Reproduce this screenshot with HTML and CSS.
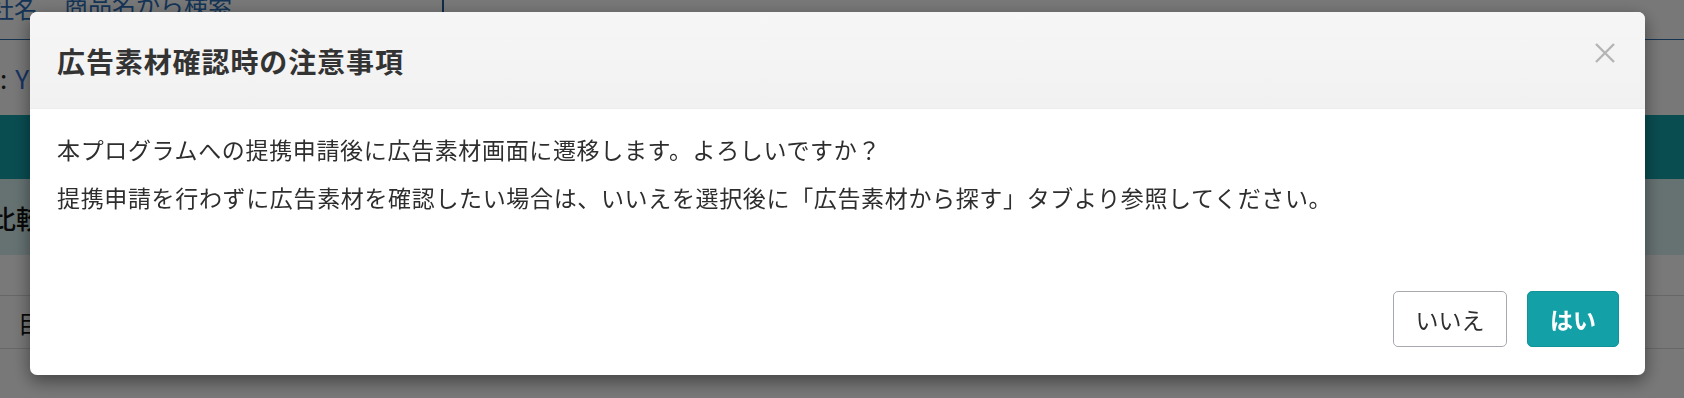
FILE: index.html
```html
<!DOCTYPE html>
<html lang="ja">
<head>
<meta charset="utf-8">
<title>広告素材確認時の注意事項</title>
<link rel="stylesheet" href="styles.css">
</head>
<body>
<div class="page">
  <div class="top-row">
    <span class="top-label">社名</span>
    <span class="top-tab">商品名から検索</span>
    <span class="top-divider"></span>
  </div>
  <div class="info-row"><span class="colon">:</span><span class="info-link">Y</span></div>
  <div class="teal-band"></div>
  <div class="light-band"><span class="compare">比較</span></div>
  <div class="blank-row"></div>
  <div class="table-row"><span class="cell">目</span></div>
  <div class="table-row short"></div>
</div>

<div class="overlay"></div>

<div class="modal" role="dialog" aria-labelledby="modal-title">
  <div class="modal-header">
    <h2 class="modal-title" id="modal-title">広告素材確認時の注意事項</h2>
    <button class="modal-close" type="button" aria-label="閉じる">
      <svg width="22" height="22" viewBox="0 0 22 22"><path d="M2 2 L20 20 M20 2 L2 20" stroke="#b4b4b4" stroke-width="2.4" fill="none"/></svg>
    </button>
  </div>
  <div class="modal-body">
    <p>本プログラムへの提携申請後に広告素材画面に遷移します。よろしいですか？</p>
    <p>提携申請を行わずに広告素材を確認したい場合は、いいえを選択後に「広告素材から探す」タブより参照してください。</p>
  </div>
  <div class="modal-footer">
    <button class="btn btn-no" type="button">いいえ</button>
    <button class="btn btn-yes" type="button">はい</button>
  </div>
</div>
</body>
</html>
```
FILE: styles.css
```css
html, body {
  margin: 0;
  padding: 0;
  height: 100%;
  overflow: hidden;
}
body {
  font-family: "Noto Sans CJK JP", "Noto Sans", sans-serif;
  background: #fafafa;
  color: #333;
}

/* ---------- background page ---------- */
.page {
  display: flex;
  flex-direction: column;
}
.top-row {
  height: 40px;
  display: flex;
  align-items: flex-start;
  border-bottom: 1px solid #2c6aa8;
  box-sizing: border-box;
}
.top-label {
  font-size: 24px;
  line-height: 24px;
  color: #2a6cb4;
  margin-left: -10px;
  margin-top: -4px;
}
.top-tab {
  font-size: 24px;
  line-height: 24px;
  color: #2a6cb4;
  margin-left: 26px;
  margin-top: -8px;
  text-decoration: underline;
}
.top-divider {
  width: 2px;
  height: 40px;
  background: #1f5a94;
  margin-left: 210px;
}
.info-row {
  height: 75px;
  display: flex;
  align-items: center;
  font-size: 26px;
}
.colon { color: #222; margin-left: 0; }
.info-link { color: #2f6cd0; margin-left: 8px; }
.teal-band {
  height: 64px;
  background: #14a2aa;
}
.light-band {
  height: 76px;
  background: #d6eeee;
  display: flex;
  align-items: center;
}
.compare {
  font-size: 26px;
  font-weight: 500;
  color: #111;
  margin-left: -10px;
}
.blank-row {
  height: 40px;
  background: #fcfcfc;
  border-bottom: 1px solid #d8d8d8;
}
.table-row {
  height: 52px;
  background: #fafafa;
  border-bottom: 1px solid #d8d8d8;
  display: flex;
  align-items: center;
}
.table-row.short { height: 50px; }
.cell {
  font-size: 24px;
  color: #111;
  margin-left: 18px;
}

/* ---------- overlay ---------- */
.overlay {
  position: fixed;
  inset: 0;
  background: rgba(0, 0, 0, 0.52);
}

/* ---------- modal ---------- */
.modal {
  position: fixed;
  left: 30px;
  top: 12px;
  width: 1615px;
  height: 363px;
  background: #fff;
  border-radius: 7px;
  box-shadow: 0 6px 18px rgba(0, 0, 0, 0.45);
  display: flex;
  flex-direction: column;
  overflow: hidden;
}
.modal-header {
  height: 97px;
  box-sizing: border-box;
  background: linear-gradient(180deg, #f6f6f6 0%, #f1f1f1 100%);
  border-bottom: 1px solid #ececec;
  display: flex;
  align-items: center;
  justify-content: space-between;
  padding: 2px 29px 0 27px;
}
.modal-title {
  margin: 0;
  font-size: 28px;
  font-weight: bold;
  letter-spacing: 0.9px;
  color: #333;
}
.modal-close {
  border: 0;
  background: none;
  padding: 0;
  width: 22px;
  height: 22px;
  margin-top: -16px;
  display: flex;
}
.modal-body {
  padding: 23px 27px 0;
}
.modal-body p {
  margin: 0 0 14px;
  font-size: 23px;
  line-height: 34px;
  letter-spacing: 0.65px;
  color: #2e2e2e;
}
.modal-footer {
  margin-top: auto;
  display: flex;
  justify-content: flex-end;
  gap: 20px;
  padding: 0 26px 28px;
}
.btn {
  height: 56px;
  border-radius: 5px;
  font-family: "Noto Sans CJK JP", sans-serif;
  font-size: 23px;
  cursor: pointer;
}
.btn-no {
  width: 114px;
  background: #fff;
  border: 1px solid #a8a8b0;
  color: #2e2e2e;
}
.btn-yes {
  width: 92px;
  background: #13a0a6;
  border: 1px solid #119399;
  color: #fff;
  font-weight: bold;
}
```
